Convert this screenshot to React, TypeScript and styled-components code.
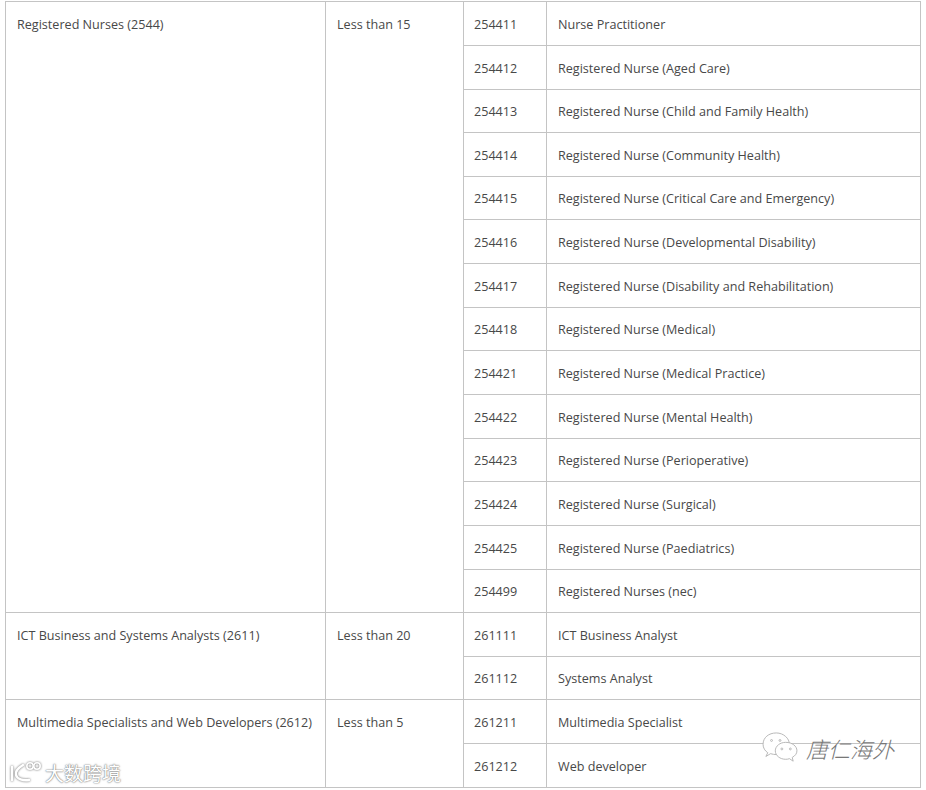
import React from 'react';
import styled, { createGlobalStyle } from 'styled-components';

const GlobalStyle = createGlobalStyle`
  html, body {
    margin: 0;
    height: 790px;
    overflow: hidden;
    background: #fff;
  }
`

const Page = styled.div`
  position: relative;
  width: 926px;
  height: 790px;
  overflow: hidden;
  padding: 1px 0 0 5px;
  box-sizing: border-box;
`

const Table = styled.table`
  border-collapse: collapse;
  table-layout: fixed;
  width: 916px;
  font-family: "Open Sans", "Liberation Sans", sans-serif;
  font-size: 12.6px;
  color: #484848;
`

const Cell = styled.td`
  border: 1px solid #c4c4c4;
  padding: 0 11px;
  box-sizing: border-box;
  vertical-align: ${props => (props.rowSpan ? 'top' : 'middle')};
  padding-top: ${props => (props.rowSpan ? '14px' : '0')};
  white-space: nowrap;
`

const Row = styled.tr<{ $height: number }>`
  height: ${props => props.$height}px;

  & > td:not([rowspan]) {
    padding-top: ${props => (props.$height === 44 ? '2px' : '0')};
  }
`

const CodeCell = styled(Cell)`
  padding-left: 10px;
`

const Logo = styled.div`
  position: absolute;
  left: 8px;
  top: 761px;
  display: flex;
  align-items: center;
  gap: 2px;
  color: #fff;
  font-family: "Noto Sans CJK SC", sans-serif;
  font-size: 19px;
  line-height: 24px;
  text-shadow: 0 0 2px #777, 0 0 1px #777;

  svg {
    filter: drop-shadow(0 0 1px #666);
  }
`

const Mark = styled.div`
  position: absolute;
  left: 761px;
  top: 732px;
  display: flex;
  align-items: center;
  gap: 7px;
  color: #777;
  font-family: "Noto Sans CJK SC", sans-serif;
  font-weight: 300;
  font-size: 22px;
  line-height: 30px;
  font-style: italic;
`

const groups = [
  {
    name: 'Registered Nurses (2544)',
    limit: 'Less than 15',
    rows: [
      ['254411', 'Nurse Practitioner'],
      ['254412', 'Registered Nurse (Aged Care)'],
      ['254413', 'Registered Nurse (Child and Family Health)'],
      ['254414', 'Registered Nurse (Community Health)'],
      ['254415', 'Registered Nurse (Critical Care and Emergency)'],
      ['254416', 'Registered Nurse (Developmental Disability)'],
      ['254417', 'Registered Nurse (Disability and Rehabilitation)'],
      ['254418', 'Registered Nurse (Medical)'],
      ['254421', 'Registered Nurse (Medical Practice)'],
      ['254422', 'Registered Nurse (Mental Health)'],
      ['254423', 'Registered Nurse (Perioperative)'],
      ['254424', 'Registered Nurse (Surgical)'],
      ['254425', 'Registered Nurse (Paediatrics)'],
      ['254499', 'Registered Nurses (nec)'],
    ],
  },
  {
    name: 'ICT Business and Systems Analysts (2611)',
    limit: 'Less than 20',
    rows: [
      ['261111', 'ICT Business Analyst'],
      ['261112', 'Systems Analyst'],
    ],
  },
  {
    name: 'Multimedia Specialists and Web Developers (2612)',
    limit: 'Less than 5',
    rows: [
      ['261211', 'Multimedia Specialist'],
      ['261212', 'Web developer'],
    ],
  },
]

// the rows of the original come out at 43.67px, so they round unevenly
const rowHeights: Record<string, number> = {
  '254411': 44, '254412': 44, '254413': 43, '254414': 44, '254415': 43, '254416': 44,
  '254417': 44, '254418': 43, '254421': 44, '254422': 44, '254423': 43, '254424': 44,
  '254425': 44, '254499': 43, '261111': 44, '261112': 43, '261211': 44, '261212': 44,
}

const App = () => {
  return (
    <Page>
      <GlobalStyle />
      <Table>
        <colgroup>
          <col style={{ width: 320 }} />
          <col style={{ width: 138 }} />
          <col style={{ width: 83 }} />
          <col style={{ width: 374 }} />
        </colgroup>
        <tbody>
          {groups.map(group =>
            group.rows.map((row, i) => (
              <Row key={row[0]} $height={rowHeights[row[0]]}>
                {i === 0 && <Cell rowSpan={group.rows.length}>{group.name}</Cell>}
                {i === 0 && <Cell rowSpan={group.rows.length}>{group.limit}</Cell>}
                <CodeCell>{row[0]}</CodeCell>
                <Cell>{row[1]}</Cell>
              </Row>
            ))
          )}
        </tbody>
      </Table>
      <Logo>
        <svg width="35" height="24" viewBox="0 0 35 24" fill="none" stroke="#fff" strokeWidth="2.4" strokeLinecap="round">
          <path d="M4 6v13M15 4c-5 3-8 6-7 10 1 4 7 6 13 5" />
          <circle cx="22" cy="5" r="3.2" strokeWidth="1.6" />
          <circle cx="29" cy="5" r="3.2" strokeWidth="1.6" />
        </svg>
        <span>大数跨境</span>
      </Logo>
      <Mark>
        <svg width="38" height="32" viewBox="0 0 38 34" fill="#fff" stroke="#b4b4b4" strokeWidth="1">
          <path d="M15 1C7 1 1 6 1 13c0 4 2 7 5 9l-2 4 5-3c2 .6 4 1 6 1 8 0 14-5 14-11S23 1 15 1z" />
          <path d="M25 11c-6 0-11 4-11 9s5 9 11 9c1.500 0 3-.2 4-.7l4 2.700-1-4c3-1.600 5-4 5-7 0-5-5-9-12-9z" />
          <circle cx="10" cy="9" r="1" />
          <circle cx="19" cy="9" r="1" />
          <circle cx="21" cy="18" r="1" />
          <circle cx="30" cy="18" r="1" />
        </svg>
        <span>唐仁海外</span>
      </Mark>
    </Page>
  );
};

export default App;
